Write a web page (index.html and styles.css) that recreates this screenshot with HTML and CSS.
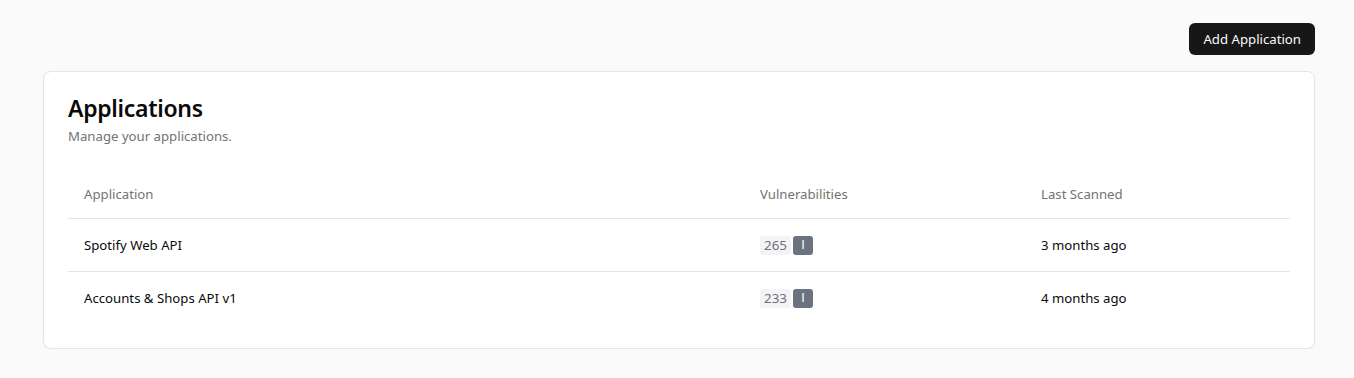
FILE: index.html
```html
<!DOCTYPE html>
<html lang="en">
<head>
    <meta charset="UTF-8">
    <meta name="viewport" content="width=device-width, initial-scale=1.0">
    <title>Applications</title>
    <link rel="stylesheet" href="styles.css">
</head>

<body>
    <div class="page">
        <div class="toolbar">
            <button class="btn-primary">Add Application</button>
        </div>

        <div class="card">
            <div class="card-header">
                <h2 class="card-title">Applications</h2>
                <p class="card-description">Manage your applications.</p>
            </div>
            <div class="card-content">
                <table class="app-table">
                    <thead>
                        <tr>
                            <th class="col-name">Application</th>
                            <th class="col-vulns">Vulnerabilities</th>
                            <th class="col-scan">Last Scanned</th>
                        </tr>
                    </thead>
                    <tbody>
                        <tr>
                            <td>Spotify Web API</td>
                            <td>
                                <div class="vulns">
                                    <span class="vuln-count">265</span>
                                    <span class="vuln-level">I</span>
                                </div>
                            </td>
                            <td>3 months ago</td>
                        </tr>
                        <tr>
                            <td>Accounts &amp; Shops API v1</td>
                            <td>
                                <div class="vulns">
                                    <span class="vuln-count">233</span>
                                    <span class="vuln-level">I</span>
                                </div>
                            </td>
                            <td>4 months ago</td>
                        </tr>
                    </tbody>
                </table>
            </div>
        </div>
    </div>
</body>
</html>
```

FILE: styles.css
```css
body {
    margin: 0;
    font-family: "Noto Sans", "Liberation Sans", sans-serif;
    background-color: #fafafa;
    color: #0a0a0a;
}
.page {
    padding: 23px 39px 0 43px;
}
.toolbar {
    display: flex;
    justify-content: flex-end;
    margin-bottom: 16px;
}
.btn-primary {
    height: 32px;
    padding: 0 14px;
    border: none;
    border-radius: 6px;
    background-color: #171717;
    color: #fafafa;
    font-family: inherit;
    font-size: 13.2px;
    cursor: pointer;
}
.card {
    background: white;
    border: 1px solid #e5e5e5;
    border-radius: 8px;
    box-shadow: 0 1px 2px rgba(0, 0, 0, 0.05);
}
.card-header {
    padding: 24px;
}
.card-title {
    margin: 0;
    font-size: 23px;
    line-height: 24px;
    font-weight: 600;
    letter-spacing: -0.3px;
}
.card-description {
    margin: 6px 0 0;
    font-size: 13.2px;
    line-height: 20px;
    color: #737373;
}
.card-content {
    padding: 0 24px 24px;
}
.app-table {
    width: 100%;
    border-collapse: collapse;
    font-size: 13.2px;
}
.app-table th {
    height: 48px;
    padding: 0 16px;
    text-align: left;
    font-weight: 400;
    color: #737373;
}
.app-table td {
    height: 20px;
    padding: 16px;
    line-height: 20px;
}
.app-table tr {
    border-bottom: 1px solid #e5e5e5;
}
.app-table tbody tr:last-child {
    border-bottom: none;
}
.col-name {
    width: 644px;
}
.col-vulns {
    width: 249px;
}
.vulns {
    display: flex;
    align-items: center;
    gap: 2px;
    height: 20px;
}
.vuln-count {
    padding: 0 4px;
    border-radius: 3px;
    background-color: #f4f4f5;
    color: #71717a;
    font-size: 13.4px;
    line-height: 19px;
}
.vuln-level {
    width: 20px;
    border-radius: 3px;
    background-color: #6b7280;
    color: white;
    text-align: center;
    font-family: "DejaVu Sans", sans-serif;
    font-size: 12px;
    line-height: 19px;
}
```
